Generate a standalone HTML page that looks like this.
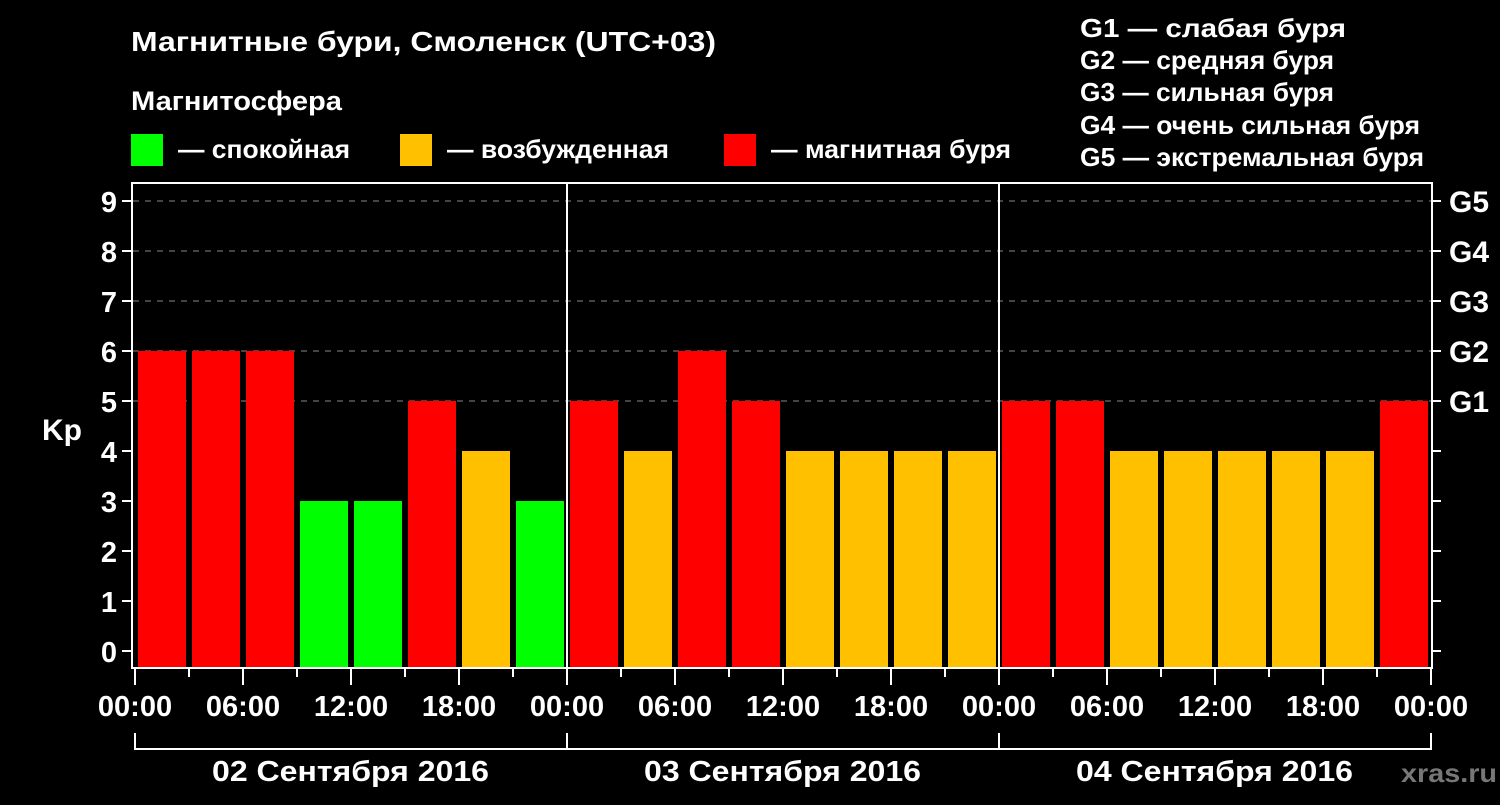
<!DOCTYPE html>
<html><head><meta charset="utf-8"><style>
body{margin:0;background:#000;width:1500px;height:800px;overflow:hidden}
text{font-family:"Liberation Sans",sans-serif;font-weight:bold;fill:#fff}
</style></head><body>
<svg width="1500" height="800" xmlns="http://www.w3.org/2000/svg">
<rect width="1500" height="800" fill="#000"/>
<text x="131" y="51" textLength="585" lengthAdjust="spacingAndGlyphs" style="font-size:28px">Магнитные бури, Смоленск (UTC+03)</text>
<text x="131" y="110" textLength="211" lengthAdjust="spacingAndGlyphs" style="font-size:27px">Магнитосфера</text>
<rect x="131" y="134" width="32" height="32" fill="#00ff00"/>
<text x="178" y="158" font-size="26" textLength="172" lengthAdjust="spacingAndGlyphs">— спокойная</text>
<rect x="400" y="134" width="32" height="32" fill="#ffc000"/>
<text x="447" y="158" font-size="26" textLength="222" lengthAdjust="spacingAndGlyphs">— возбужденная</text>
<rect x="724" y="134" width="32" height="32" fill="#ff0000"/>
<text x="771" y="158" font-size="26" textLength="240" lengthAdjust="spacingAndGlyphs">— магнитная буря</text>
<g font-size="26">
<text x="1080" y="37" textLength="266" lengthAdjust="spacingAndGlyphs">G1 — слабая буря</text>
<text x="1080" y="69" textLength="254" lengthAdjust="spacingAndGlyphs">G2 — средняя буря</text>
<text x="1080" y="101" textLength="254" lengthAdjust="spacingAndGlyphs">G3 — сильная буря</text>
<text x="1080" y="134" textLength="340" lengthAdjust="spacingAndGlyphs">G4 — очень сильная буря</text>
<text x="1080" y="166" textLength="344" lengthAdjust="spacingAndGlyphs">G5 — экстремальная буря</text>
</g>
<g stroke="#888" stroke-width="1" stroke-dasharray="6,6">
<line x1="133" y1="201" x2="1431" y2="201"/><line x1="133" y1="251" x2="1431" y2="251"/><line x1="133" y1="301" x2="1431" y2="301"/><line x1="133" y1="351" x2="1431" y2="351"/><line x1="133" y1="401" x2="1431" y2="401"/>
</g>
<g id="bars"></g>
<g stroke="#fff" stroke-width="2" fill="none">
<rect x="132" y="183" width="1300" height="485"/>
<line x1="567" y1="183" x2="567" y2="668"/><line x1="999" y1="183" x2="999" y2="668"/>
<path d="M135 733V749H1431V733M567 733V749M999 733V749"/>
</g>
<g id="t" stroke="#fff" stroke-width="2"></g>
<g font-size="29" text-anchor="end">
<text x="117" y="662">0</text><text x="117" y="612">1</text><text x="117" y="562">2</text><text x="117" y="512">3</text><text x="117" y="462">4</text><text x="117" y="412">5</text><text x="117" y="362">6</text><text x="117" y="312">7</text><text x="117" y="262">8</text><text x="117" y="212">9</text>
</g>
<text x="42" y="440" font-size="30">Kp</text>
<g font-size="30">
<text x="1449" y="412">G1</text><text x="1449" y="362">G2</text><text x="1449" y="312">G3</text><text x="1449" y="262">G4</text><text x="1449" y="212">G5</text>
</g>
<g font-size="29" text-anchor="middle">
<text x="135" y="716">00:00</text><text x="243" y="716">06:00</text><text x="351" y="716">12:00</text><text x="459" y="716">18:00</text>
<text x="567" y="716">00:00</text><text x="675" y="716">06:00</text><text x="783" y="716">12:00</text><text x="891" y="716">18:00</text>
<text x="999" y="716">00:00</text><text x="1107" y="716">06:00</text><text x="1215" y="716">12:00</text><text x="1323" y="716">18:00</text><text x="1431" y="716">00:00</text>
</g>
<g font-size="29">
<text x="212" y="781" textLength="277" lengthAdjust="spacingAndGlyphs">02 Сентября 2016</text>
<text x="644" y="781" textLength="277" lengthAdjust="spacingAndGlyphs">03 Сентября 2016</text>
<text x="1076" y="781" textLength="277" lengthAdjust="spacingAndGlyphs">04 Сентября 2016</text>
</g>
<text x="1401" y="782" font-size="26" textLength="96" lengthAdjust="spacingAndGlyphs" style="fill:#777">xras.ru</text>
</svg>
<script>
var v=[6,6,6,3,3,5,4,3,5,4,6,5,4,4,4,4,5,5,4,4,4,4,4,5];
var ns="http://www.w3.org/2000/svg",b=document.getElementById('bars'),t=document.getElementById('t');
v.forEach(function(k,i){var r=document.createElementNS(ns,'rect');r.setAttribute('x',138+54*i);r.setAttribute('y',651-50*k);r.setAttribute('width',48);r.setAttribute('height',17+50*k);r.setAttribute('fill',k>=5?'#ff0000':k==4?'#ffc000':'#00ff00');b.appendChild(r);});
function L(a,b2,c,d){var l=document.createElementNS(ns,'line');l.setAttribute('x1',a);l.setAttribute('y1',b2);l.setAttribute('x2',c);l.setAttribute('y2',d);t.appendChild(l);}
for(var i=0;i<=24;i++){var x=135+54*i;L(x,668,x,(i%2==0)?685:677);}
for(var k=0;k<=9;k++){var y=651-50*k;L(122,y,132,y);L(1432,y,1441,y);}
</script>
</body></html>
